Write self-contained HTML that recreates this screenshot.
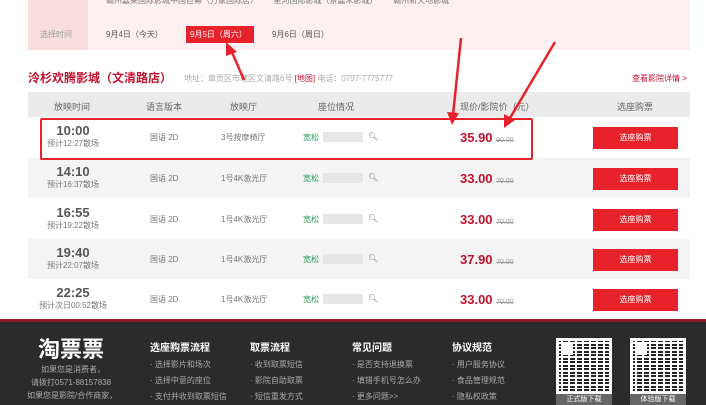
<!DOCTYPE html>
<html><head><meta charset="utf-8"><style>
*{margin:0;padding:0;box-sizing:border-box}
body{width:706px;height:405px;overflow:hidden;background:#fff;font-family:"Liberation Sans","Noto Sans CJK SC",sans-serif;position:relative;font-size:9px;color:#666}
.a{position:absolute;white-space:nowrap}
.row{position:absolute;left:28px;width:662px;height:40px}
.g{background:#f4f4f4}
.t{position:absolute;left:0;width:90px;text-align:center}
.t b{display:block;font-size:13px;color:#555;margin-top:6px}
.t i{font-style:normal;font-size:8px;color:#777}
.c{position:absolute;top:15px;font-size:8px;color:#777}
.btn{position:absolute;left:565px;top:10px;width:85px;height:22px;background:#e8222a;color:#fff;text-align:center;line-height:22px;font-size:8px}
.pr{position:absolute;left:432px;top:13px;font-size:13px;font-weight:bold;color:#c4112d}
.pr s{font-size:7px;color:#999;font-weight:normal}
.bar{position:absolute;left:295px;top:15px;width:40px;height:10px;background:#e6e6e6}
.ft h4{font-size:10px;color:#fff;font-weight:bold;position:absolute;white-space:nowrap}
.ft p{font-size:8px;color:#aaa;position:absolute;white-space:nowrap}
.qr{position:absolute;width:56px;height:56px;border:3px solid #fff;background:
linear-gradient(#fff,#fff) 2px 2px/12px 12px no-repeat,
repeating-linear-gradient(90deg,transparent 0 2px,#fff 2px 4px,transparent 4px 7px),
repeating-linear-gradient(0deg,#222 0 2px,#fff 2px 3px,#222 3px 5px,#fff 5px 7px)}
</style></head><body>
<div class="a" style="left:28px;top:0;width:662px;height:50px;background:#fdf0f0"></div>
<div class="a" style="left:28px;top:0;width:60px;height:50px;background:#f8dede"></div>
<div class="a" style="left:106px;top:-5px;font-size:8px;color:#777">赣州嘉莱国际影城中国巨幕（万象国际店） &nbsp; &nbsp; &nbsp; 星河国际影城（景嘉禾影城） &nbsp; &nbsp; &nbsp; 赣州新天地影城</div>
<div class="a" style="left:40px;top:29px;font-size:8px;color:#999">选择时间</div>
<div class="a" style="left:106px;top:29px;font-size:8px;color:#555">9月4日（今天）</div>
<div class="a" style="left:186px;top:26px;width:68px;height:17px;background:#e8222a;color:#fff;font-size:8px;line-height:17px;padding-left:4px">9月5日（周六）</div>
<div class="a" style="left:272px;top:29px;font-size:8px;color:#555">9月6日（周日）</div>
<div class="a" style="left:28px;top:69px;font-size:12px;font-weight:bold;color:#c4112d">泠杉欢腾影城（文清路店）</div>
<div class="a" style="left:184px;top:73px;font-size:8px;color:#aaa">地址：章贡区市辖区文清路6号 <span style="color:#c4112d">[地图]</span> 电话：0797-7775777</div>
<div class="a" style="left:632px;top:73px;font-size:8px;color:#c4112d">查看影院详情 &gt;</div>
<div class="a" style="left:28px;top:92px;width:662px;height:25px;background:#ebebeb"></div>
<div class="a" style="left:54px;top:100px;font-size:9px;color:#666">放映时间</div>
<div class="a" style="left:146px;top:100px;font-size:9px;color:#666">语言版本</div>
<div class="a" style="left:230px;top:100px;font-size:9px;color:#666">放映厅</div>
<div class="a" style="left:318px;top:100px;font-size:9px;color:#666">座位情况</div>
<div class="a" style="left:460px;top:100px;font-size:9px;color:#666">现价/影院价（元）</div>
<div class="a" style="left:617px;top:100px;font-size:9px;color:#666">选座购票</div>

<div class="row" style="top:117px"><div class="t"><b>10:00</b><i>预计12:27散场</i></div><div class="c" style="left:122px">国语 2D</div><div class="c" style="left:193px">3号按摩椅厅</div><div class="c" style="left:275px;color:#2a9d5c">宽松</div><div class="bar"></div><div class="c" style="left:340px">🔍︎</div><div class="pr">35.90 <s>90.00</s></div><div class="btn">选座购票</div></div>
<div class="row g" style="top:158px"><div class="t"><b>14:10</b><i>预计16:37散场</i></div><div class="c" style="left:122px">国语 2D</div><div class="c" style="left:193px">1号4K激光厅</div><div class="c" style="left:275px;color:#2a9d5c">宽松</div><div class="bar"></div><div class="c" style="left:340px">🔍︎</div><div class="pr">33.00 <s>70.00</s></div><div class="btn">选座购票</div></div>
<div class="row" style="top:199px"><div class="t"><b>16:55</b><i>预计19:22散场</i></div><div class="c" style="left:122px">国语 2D</div><div class="c" style="left:193px">1号4K激光厅</div><div class="c" style="left:275px;color:#2a9d5c">宽松</div><div class="bar"></div><div class="c" style="left:340px">🔍︎</div><div class="pr">33.00 <s>70.00</s></div><div class="btn">选座购票</div></div>
<div class="row g" style="top:239px"><div class="t"><b>19:40</b><i>预计22:07散场</i></div><div class="c" style="left:122px">国语 2D</div><div class="c" style="left:193px">1号4K激光厅</div><div class="c" style="left:275px;color:#2a9d5c">宽松</div><div class="bar"></div><div class="c" style="left:340px">🔍︎</div><div class="pr">37.90 <s>70.00</s></div><div class="btn">选座购票</div></div>
<div class="row" style="top:279px"><div class="t"><b>22:25</b><i>预计次日00:52散场</i></div><div class="c" style="left:122px">国语 2D</div><div class="c" style="left:193px">1号4K激光厅</div><div class="c" style="left:275px;color:#2a9d5c">宽松</div><div class="bar"></div><div class="c" style="left:340px">🔍︎</div><div class="pr">33.00 <s>70.00</s></div><div class="btn">选座购票</div></div>

<div class="a" style="left:40px;top:118px;width:493px;height:42px;border:2px solid #e8222a;border-radius:2px"></div>

<div class="ft a" style="left:0;top:319px;width:706px;height:86px;background:#2b2b2b;border-top:3px solid #8b1a2a">
<div class="a" style="left:38px;top:10px;font-size:22px;font-weight:bold;color:#fff">淘票票</div>
<p style="left:41px;top:42px">如果您是消费者，</p>
<p style="left:31px;top:55px">请拨打0571-88157838</p>
<p style="left:27px;top:68px">如果您是影院/合作商家，</p>
<h4 style="left:150px;top:17px">选座购票流程</h4><p style="left:150px;top:37px">· 选择影片和场次</p><p style="left:150px;top:53px">· 选择中意的座位</p><p style="left:150px;top:69px">· 支付并收到取票短信</p>
<h4 style="left:250px;top:17px">取票流程</h4><p style="left:250px;top:37px">· 收到取票短信</p><p style="left:250px;top:53px">· 影院自助取票</p><p style="left:250px;top:69px">· 短信重发方式</p>
<h4 style="left:352px;top:17px">常见问题</h4><p style="left:352px;top:37px">· 是否支持退换票</p><p style="left:352px;top:53px">· 填错手机号怎么办</p><p style="left:352px;top:69px">· 更多问题&gt;&gt;</p>
<h4 style="left:452px;top:17px">协议规范</h4><p style="left:452px;top:37px">· 用户服务协议</p><p style="left:452px;top:53px">· 食品管理规范</p><p style="left:452px;top:69px">· 隐私权政策</p>
<div class="qr" style="left:556px;top:16px"></div>
<div class="a" style="left:556px;top:72px;width:56px;height:11px;background:#666;color:#fff;font-size:7px;text-align:center;line-height:11px">正式版下载</div>
<div class="qr" style="left:630px;top:16px"></div>
<div class="a" style="left:630px;top:72px;width:56px;height:11px;background:#666;color:#fff;font-size:7px;text-align:center;line-height:11px">体验版下载</div>
</div>

<svg class="a" style="left:0;top:0" width="706" height="405">
<g stroke="#e8222a" stroke-width="2.5" fill="#e8222a">
<line x1="244" y1="80" x2="231" y2="50"/><polygon points="226,42 237,52 226,56" stroke="none"/>
<line x1="461" y1="38" x2="453" y2="115"/><polygon points="452,125 447,112 459,113" stroke="none"/>
<line x1="555" y1="42" x2="510" y2="118"/><polygon points="504,128 504,114 515,120" stroke="none"/>
</g></svg>
</body></html>
